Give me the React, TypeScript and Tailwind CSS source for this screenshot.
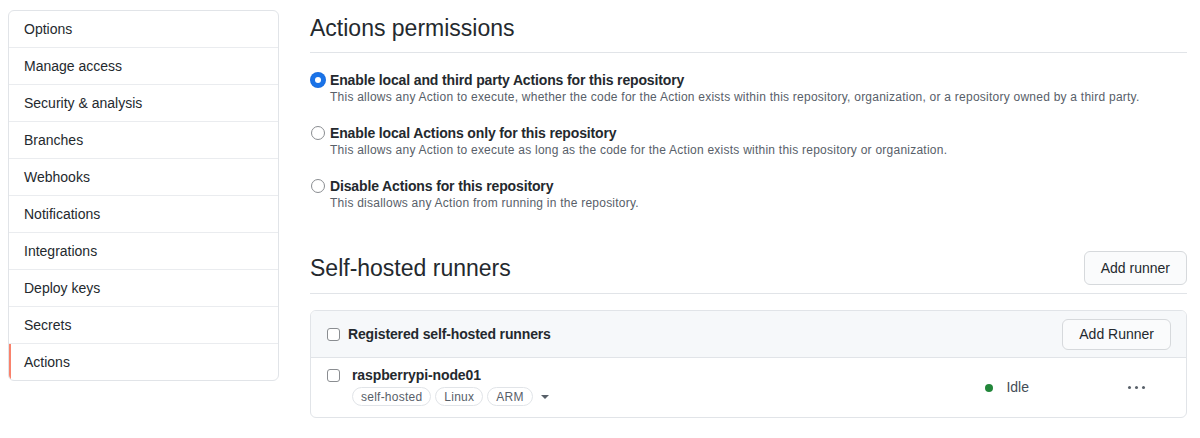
import React from "react";

const menu = [
  "Options",
  "Manage access",
  "Security & analysis",
  "Branches",
  "Webhooks",
  "Notifications",
  "Integrations",
  "Deploy keys",
  "Secrets",
  "Actions",
];

const options = [
  {
    title: "Enable local and third party Actions for this repository",
    desc: "This allows any Action to execute, whether the code for the Action exists within this repository, organization, or a repository owned by a third party.",
    checked: true,
  },
  {
    title: "Enable local Actions only for this repository",
    desc: "This allows any Action to execute as long as the code for the Action exists within this repository or organization.",
    checked: false,
  },
  {
    title: "Disable Actions for this repository",
    desc: "This disallows any Action from running in the repository.",
    checked: false,
  },
];

function Radio({ checked }: { checked: boolean }) {
  if (checked) {
    return (
      <span className="mt-[2px] flex h-[14px] w-[14px] shrink-0 items-center justify-center rounded-full bg-[#1a73e8] shadow-[0_0_0_1px_#1a6ee0]">
        <span className="h-[6px] w-[6px] rounded-full bg-white" />
      </span>
    );
  }
  return (
    <span className="mt-[2px] block h-[14px] w-[14px] shrink-0 rounded-full border border-[#8a8d91] bg-white" />
  );
}

function Checkbox() {
  return (
    <span className="block h-[13px] w-[13px] shrink-0 rounded-[3px] border border-[#8a8d91] bg-white" />
  );
}

export default function App() {
  return (
    <div
      className="flex h-[438px] w-[1200px] bg-white text-[#24292e]"
      style={{ fontFamily: '"Liberation Sans", Arial, sans-serif' }}
    >
      {/* settings navigation */}
      <div className="pl-[8px] pt-[10px]">
        <nav className="w-[271px] overflow-hidden rounded-[6px] border border-[#e1e4e8]">
          {menu.map((item, i) => (
            <div
              key={item}
              className={`relative flex items-center pl-[15px] text-[14px] ${
                i < menu.length - 1 ? "h-[37px] border-b border-[#eaecef]" : "h-[36px]"
              }`}
            >
              {item === "Actions" && (
                <span className="absolute left-0 top-0 h-full w-[2px] bg-[#f9826c]" />
              )}
              {item}
            </div>
          ))}
        </nav>
      </div>

      {/* main column */}
      <main className="ml-[31px] w-[877px]">
        <div className="flex h-[53px] items-center border-b border-[#e1e4e8] pt-[4px]">
          <h2 className="text-[23px] font-normal">Actions permissions</h2>
        </div>

        <div className="flex flex-col gap-[18px] pt-[18px]">
          {options.map((o) => (
            <div key={o.title} className="flex gap-[5px] pl-[1px]">
              <Radio checked={o.checked} />
              <div className="flex flex-col">
                <span className="text-[14px] font-bold leading-[18px] tracking-[-0.14px]">
                  {o.title}
                </span>
                <span className="text-[12px] leading-[17px] tracking-[0.24px] text-[#586069]">
                  {o.desc}
                </span>
              </div>
            </div>
          ))}
        </div>

        <div className="mt-[39px] flex h-[43px] items-center justify-between border-b border-[#e1e4e8] pb-[8px]">
          <h2 className="text-[23px] font-normal">Self-hosted runners</h2>
          <button className="h-[34px] rounded-[6px] border border-[#d6d9dc] bg-[#fafbfc] px-[16px] text-[14px] font-medium">
            Add runner
          </button>
        </div>

        <div className="mt-[16px] overflow-hidden rounded-[6px] border border-[#e1e4e8]">
          <div className="flex h-[47px] items-center justify-between border-b border-[#e1e4e8] bg-[#f6f8fa] pl-[16px] pr-[15px]">
            <div className="flex items-center gap-[8px]">
              <Checkbox />
              <span className="text-[14px] font-bold tracking-[-0.14px]">
                Registered self-hosted runners
              </span>
            </div>
            <button className="h-[31px] rounded-[6px] border border-[#d6d9dc] bg-[#fafbfc] px-[16px] text-[14px] font-medium">
              Add Runner
            </button>
          </div>
          <div className="flex h-[59px] items-start pl-[16px] pt-[8px]">
            <div className="mt-[3px]">
              <Checkbox />
            </div>
            <div className="ml-[12px] flex flex-col">
              <span className="text-[14px] font-bold leading-[18px] tracking-[-0.1px]">
                raspberrypi-node01
              </span>
              <div className="mt-[3px] flex items-center gap-[4px]">
                {["self-hosted", "Linux", "ARM"].map((l) => (
                  <span
                    key={l}
                    className="flex h-[19px] items-center rounded-full border border-[#e1e4e8] px-[8px] text-[12px] tracking-[0.24px] text-[#586069]"
                  >
                    {l}
                  </span>
                ))}
                <span className="ml-[4px] h-0 w-0 border-x-[4px] border-t-[4px] border-x-transparent border-t-[#586069]" />
              </div>
            </div>
            <div className="ml-auto mt-[11px] flex items-center">
              <span className="h-[8px] w-[8px] rounded-full bg-[#22863a]" />
              <span className="ml-[13px] text-[14px] text-[#444d56]">Idle</span>
              <span className="ml-[99px] mr-[41px] flex gap-[4px]">
                <span className="h-[3px] w-[3px] rounded-full bg-[#586069]" />
                <span className="h-[3px] w-[3px] rounded-full bg-[#586069]" />
                <span className="h-[3px] w-[3px] rounded-full bg-[#586069]" />
              </span>
            </div>
          </div>
        </div>
      </main>
    </div>
  );
}
